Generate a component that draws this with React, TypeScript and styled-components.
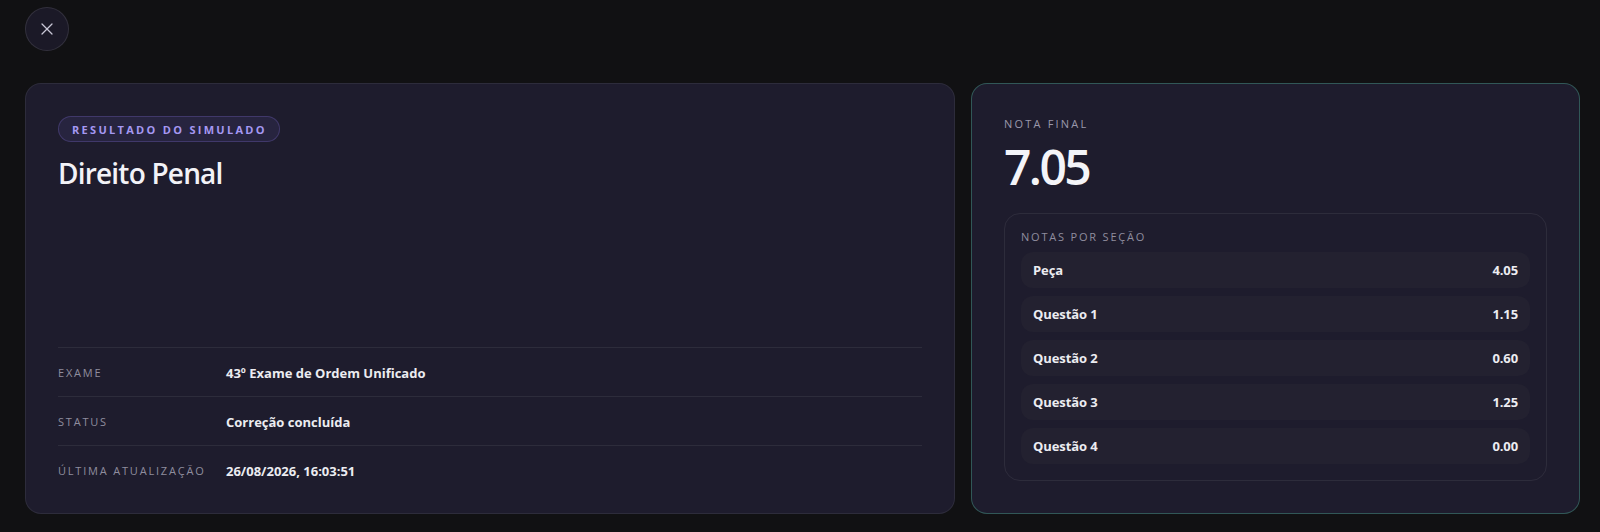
import React from "react";
import styled, { createGlobalStyle } from "styled-components";
import { X } from "lucide-react";

const Global = createGlobalStyle`
  html, body { margin: 0; padding: 0; background: #111113; }
  body { font-family: "Open Sans", "Noto Sans", sans-serif; color: #ececf1; }
  * { box-sizing: border-box; }
`;

const Page = styled.div`
  min-height: 532px;
  padding: 7px 20px 18px 25px;
  display: flex;
  flex-direction: column;
  gap: 32px;
`;

const CloseButton = styled.button`
  width: 44px;
  height: 44px;
  border-radius: 50%;
  background: #1b1927;
  border: 1px solid rgba(255, 255, 255, 0.1);
  color: #c9c7d6;
  display: flex;
  align-items: center;
  justify-content: center;
  padding: 0;
  cursor: pointer;
`;

const Grid = styled.div`
  display: grid;
  grid-template-columns: minmax(0, 1fr) 609px;
  gap: 16px;
  height: 431px;
`;

const Card = styled.section<{ $accent?: boolean }>`
  background: #1e1c2d;
  border: 1px solid ${(p) => (p.$accent ? "rgba(74, 160, 140, 0.45)" : "rgba(255, 255, 255, 0.07)")};
  border-radius: 16px;
  padding: 32px;
  display: flex;
  flex-direction: column;
`;

const Badge = styled.span`
  align-self: flex-start;
  display: inline-flex;
  align-items: center;
  height: 26px;
  padding: 0 12px 0 13px;
  border-radius: 13px;
  background: rgba(130, 110, 230, 0.1);
  border: 1px solid rgba(140, 120, 235, 0.25);
  color: #a598f2;
  font-size: 11px;
  font-weight: 700;
  letter-spacing: 2.3px;
  text-transform: uppercase;
`;

const Title = styled.h1`
  margin: 15px 0 0;
  font-size: 28px;
  line-height: 1.2;
  font-weight: 600;
  color: #f2f2f7;
  letter-spacing: -0.8px;
`;

const Details = styled.dl`
  margin: auto 0 0;
  display: flex;
  flex-direction: column;
`;

const DetailRow = styled.div`
  display: grid;
  grid-template-columns: 168px 1fr;
  align-items: center;
  border-top: 1px solid rgba(255, 255, 255, 0.07);
  padding: 15px 0 13px;
  &:last-child { padding-bottom: 0; }
`;

const DetailLabel = styled.dt`
  margin: 0;
  font-size: 11px;
  line-height: 20px;
  letter-spacing: 1.8px;
  text-transform: uppercase;
  color: #8f8d9e;
`;

const DetailValue = styled.dd`
  margin: 0;
  font-size: 13px;
  line-height: 20px;
  font-weight: 700;
  color: #ececf1;
  letter-spacing: 0;
`;

const Eyebrow = styled.div`
  font-size: 11px;
  line-height: 16px;
  letter-spacing: 2.2px;
  text-transform: uppercase;
  color: #9a98aa;
`;

const Score = styled.div`
  margin-top: 7px;
  font-size: 48px;
  line-height: 56px;
  font-weight: 600;
  color: #f4f4f8;
  letter-spacing: -2.6px;
`;

const SectionBox = styled.div`
  margin-top: auto;
  border: 1px solid rgba(255, 255, 255, 0.07);
  border-radius: 16px;
  padding: 16px;
  display: flex;
  flex-direction: column;
  gap: 8px;
`;

const SectionTitle = styled.div`
  font-size: 11px;
  line-height: 14px;
  letter-spacing: 1.8px;
  text-transform: uppercase;
  color: #8f8d9e;
`;

const SectionList = styled.div`
  display: flex;
  flex-direction: column;
  gap: 8px;
`;

const SectionRow = styled.div`
  height: 36px;
  border-radius: 12px;
  background: #232130;
  padding: 0 12px;
  display: flex;
  align-items: center;
  justify-content: space-between;
  font-size: 13px;
  font-weight: 700;
  color: #ececf1;
  letter-spacing: -0.1px;
`;

const details = [
  { label: "Exame", value: "43º Exame de Ordem Unificado" },
  { label: "Status", value: "Correção concluída" },
  { label: "Última atualização", value: "26/08/2026, 16:03:51" },
];

const sections = [
  { name: "Peça", score: "4.05" },
  { name: "Questão 1", score: "1.15" },
  { name: "Questão 2", score: "0.60" },
  { name: "Questão 3", score: "1.25" },
  { name: "Questão 4", score: "0.00" },
];

export default function App() {
  return (
    <>
      <Global />
      <Page>
        <CloseButton aria-label="Fechar">
          <X size={20} strokeWidth={1.5} />
        </CloseButton>
        <Grid>
          <Card>
            <Badge>Resultado do simulado</Badge>
            <Title>Direito Penal</Title>
            <Details>
              {details.map((d) => (
                <DetailRow key={d.label}>
                  <DetailLabel>{d.label}</DetailLabel>
                  <DetailValue>{d.value}</DetailValue>
                </DetailRow>
              ))}
            </Details>
          </Card>
          <Card $accent>
            <Eyebrow>Nota final</Eyebrow>
            <Score>7.05</Score>
            <SectionBox>
              <SectionTitle>Notas por seção</SectionTitle>
              <SectionList>
                {sections.map((s) => (
                  <SectionRow key={s.name}>
                    <span>{s.name}</span>
                    <span>{s.score}</span>
                  </SectionRow>
                ))}
              </SectionList>
            </SectionBox>
          </Card>
        </Grid>
      </Page>
    </>
  );
}
